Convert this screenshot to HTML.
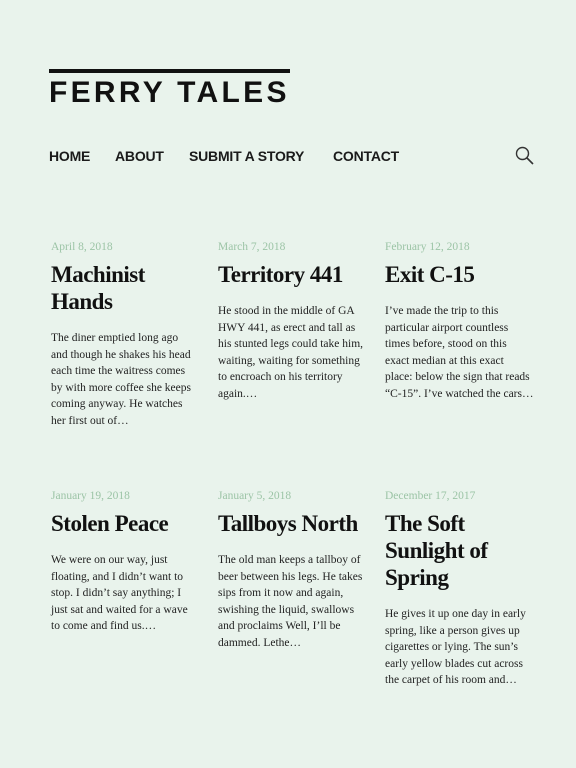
<!DOCTYPE html>
<html><head><meta charset="utf-8"><style>
body{margin:0;background:#e9f3ec;width:576px;height:768px;overflow:hidden;position:relative;font-family:"Liberation Serif",serif;color:#1a1a1a}
.bar{position:absolute;left:49px;top:69px;width:241px;height:4px;background:#111}
.logo{position:absolute;left:49px;top:75px;font:bold 30px "Liberation Sans",sans-serif;letter-spacing:3.3px;color:#111;line-height:36px;white-space:nowrap}
.nav{position:absolute;top:148px;font:bold 14px "Liberation Sans",sans-serif;color:#1a1a1a;letter-spacing:-0.2px;white-space:nowrap}
.post{position:absolute;width:150px}
.d{font-size:11.5px;color:#9cc4a6;line-height:14px}
.t{font-family:"Liberation Serif",serif;font-weight:bold;font-size:23px;line-height:27px;margin-top:7px;letter-spacing:-0.5px;color:#111;white-space:nowrap}
.b{font-size:11.5px;line-height:16.5px;margin-top:15px;color:#222;white-space:nowrap}
</style></head><body>
<div class="bar"></div>
<div class="logo">FERRY TALES</div>
<div class="nav" style="left:49px">HOME</div>
<div class="nav" style="left:115px">ABOUT</div>
<div class="nav" style="left:189px">SUBMIT A STORY</div>
<div class="nav" style="left:333px">CONTACT</div>
<svg style="position:absolute;left:514px;top:145px" width="22" height="22" viewBox="0 0 22 22"><circle cx="8.5" cy="8.5" r="6" fill="none" stroke="#333" stroke-width="1.4"/><line x1="13" y1="13" x2="19" y2="19" stroke="#333" stroke-width="1.6"/></svg>

<div class="post" style="left:51px;top:240px"><div class="d">April 8, 2018</div><div class="t">Machinist<br>Hands</div><div class="b">The diner emptied long ago<br>and though he shakes his head<br>each time the waitress comes<br>by with more coffee she keeps<br>coming anyway. He watches<br>her first out of…</div></div>
<div class="post" style="left:218px;top:240px"><div class="d">March 7, 2018</div><div class="t">Territory 441</div><div class="b">He stood in the middle of GA<br>HWY 441, as erect and tall as<br>his stunted legs could take him,<br>waiting, waiting for something<br>to encroach on his territory<br>again.…</div></div>
<div class="post" style="left:385px;top:240px"><div class="d">February 12, 2018</div><div class="t">Exit C-15</div><div class="b">I’ve made the trip to this<br>particular airport countless<br>times before, stood on this<br>exact median at this exact<br>place: below the sign that reads<br>“C-15”. I’ve watched the cars…</div></div>

<div class="post" style="left:51px;top:489px"><div class="d">January 19, 2018</div><div class="t">Stolen Peace</div><div class="b">We were on our way, just<br>floating, and I didn’t want to<br>stop. I didn’t say anything; I<br>just sat and waited for a wave<br>to come and find us.…</div></div>
<div class="post" style="left:218px;top:489px"><div class="d">January 5, 2018</div><div class="t">Tallboys North</div><div class="b">The old man keeps a tallboy of<br>beer between his legs. He takes<br>sips from it now and again,<br>swishing the liquid, swallows<br>and proclaims Well, I’ll be<br>dammed. Lethe…</div></div>
<div class="post" style="left:385px;top:489px"><div class="d">December 17, 2017</div><div class="t">The Soft<br>Sunlight of<br>Spring</div><div class="b">He gives it up one day in early<br>spring, like a person gives up<br>cigarettes or lying. The sun’s<br>early yellow blades cut across<br>the carpet of his room and…</div></div>
</body></html>
